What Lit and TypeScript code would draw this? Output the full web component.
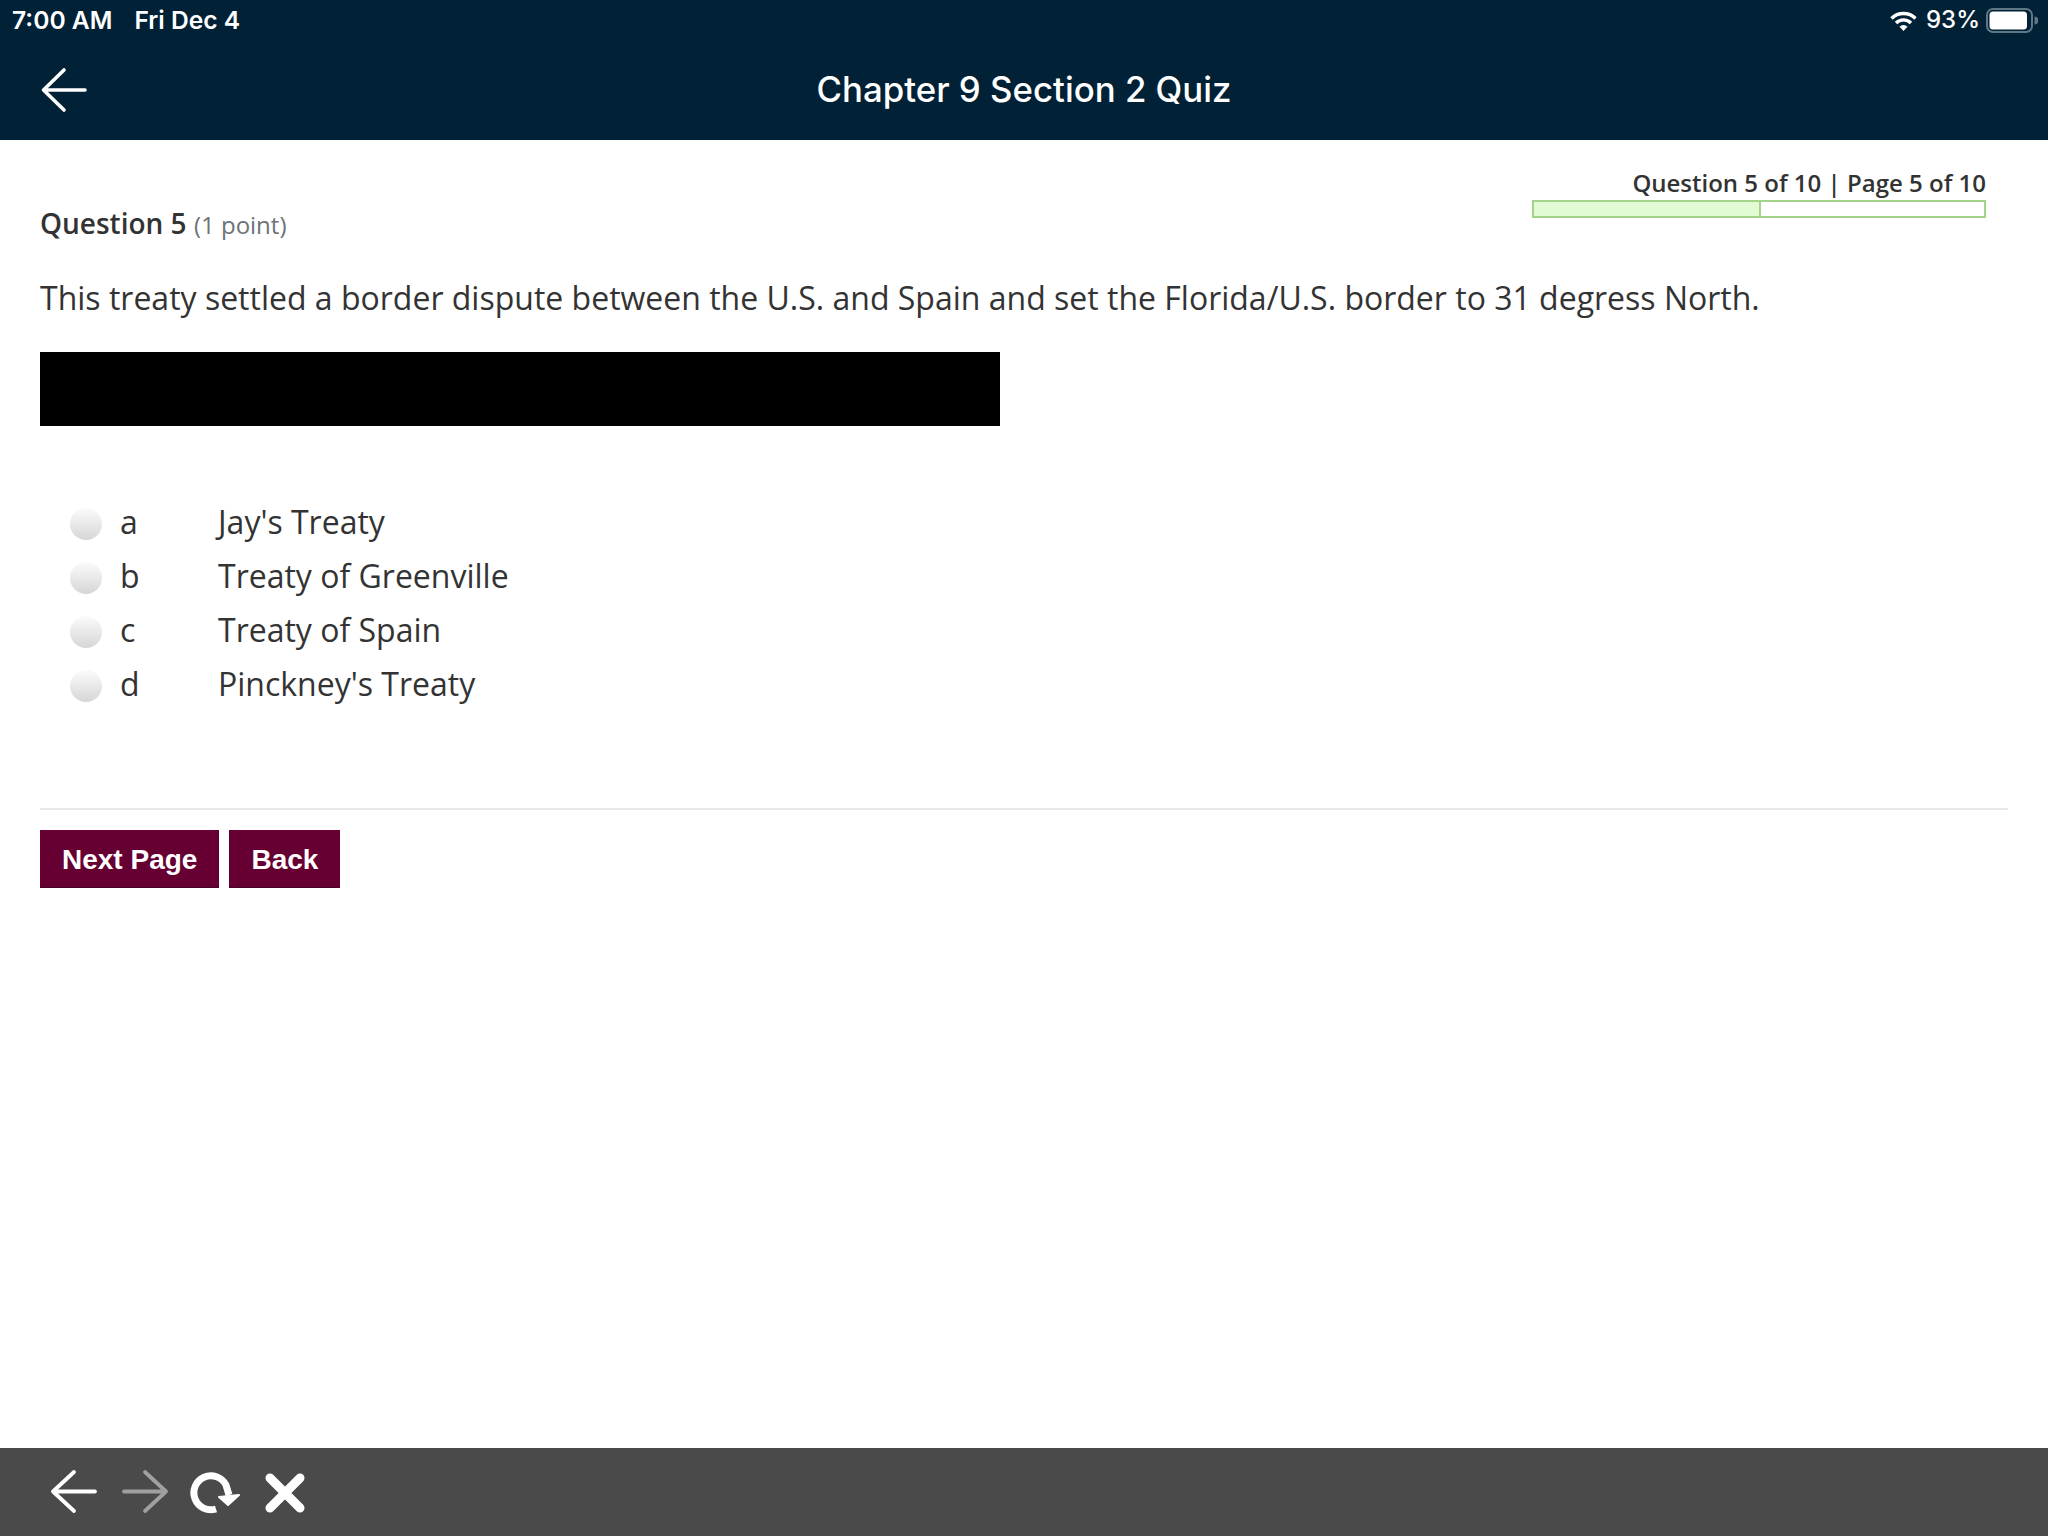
import { LitElement, html, css } from "lit";
import { customElement } from "lit/decorators.js";

const OPTIONS = [
  ["a", "Jay's Treaty"],
  ["b", "Treaty of Greenville"],
  ["c", "Treaty of Spain"],
  ["d", "Pinckney's Treaty"],
];

@customElement("app-root")
export class AppRoot extends LitElement {
  static styles = css`
    :host { display: flex; flex-direction: column; height: 1536px; width: 2048px; background: #fff; font-family: "Open Sans", sans-serif; color: #333; overflow: hidden; }
    .head { height: 140px; background: #012136; color: #fff; display: flex; flex-direction: column; flex: none; }
    .status { height: 38px; box-sizing: border-box; padding: 3px 10px 0 12px; display: flex; align-items: center; justify-content: space-between; font-family: Inter, sans-serif; }
    .status-left { display: flex; gap: 22px; font-weight: 600; font-size: 24.6px; padding-bottom: 2px; }
    .status-right { display: flex; align-items: center; gap: 6px; font-weight: 500; font-size: 24px; }
    .pct { padding-bottom: 2px; }
    .wifi { margin-right: 3px; }
    .nav { flex: 1; position: relative; display: flex; align-items: center; justify-content: center; }
    .nav svg { position: absolute; left: 40px; top: 29px; }
    .title { font-family: Inter, sans-serif; font-size: 34.8px; font-weight: 500; }
    .main { flex: 1; padding: 0 40px; position: relative; display: flex; flex-direction: column; }
    .progress { position: absolute; right: 62px; top: 27px; width: 454px; display: flex; flex-direction: column; align-items: flex-end; }
    .progress-text { font-size: 24px; font-weight: 600; line-height: 32px; color: #333; white-space: nowrap; }
    .bar { width: 100%; height: 18px; margin-top: 1px; box-sizing: border-box; border: 2px solid #a3d48a; display: flex; background: #fff; }
    .fill { background: #e2fbd5; border-right: 2px solid #a3d48a; }
    .qhead { margin-top: 63px; height: 40px; font-size: 28px; font-weight: 600; line-height: 40px; }
    .qhead small { font-size: 24px; font-weight: 400; color: #6c7378; line-height: 1; }
    .qtext { margin-top: 33px; font-size: 32px; line-height: 44px; height: 44px; }
    .redact { margin-top: 32px; width: 960px; height: 74px; background: #000; }
    .options { margin-top: 70px; display: flex; flex-direction: column; }
    .opt { display: flex; align-items: center; height: 54px; font-size: 32px; line-height: 44px; }
    .radio { width: 32px; height: 32px; border-radius: 50%; margin: 1px 0 0 30px; background: linear-gradient(#fbfbfb, #d6d6d6); }
    .letter { width: 98px; margin-left: 18px; padding-bottom: 2px; }
    .label { padding-bottom: 2px; }
    .rule { margin-top: 96px; height: 2px; background: #e9e9e9; }
    .buttons { margin-top: 20px; display: flex; gap: 10px; }
    .btn { height: 58px; box-sizing: border-box; background: #660033; color: #fff; border: 0; border-bottom: 1px solid #4a0025; padding: 2px 22px 0; font-family: "Liberation Sans", sans-serif; font-weight: 700; font-size: 28px; }
    .foot { height: 88px; background: #4a4a4a; flex: none; display: flex; align-items: center; padding-left: 48px; }
    .foot svg { display: block; }
  `;

  render() {
    return html`
      <div class="head">
        <div class="status">
          <div class="status-left"><span>7:00 AM</span><span>Fri Dec 4</span></div>
          <div class="status-right">
            <svg class="wifi" width="27" height="20" viewBox="0 0 27 20" fill="none" stroke="#fff" stroke-width="3.4">
              <path d="M1.5 7.5 A17 17 0 0 1 25.5 7.5" /><path d="M6 12 A10.5 10.5 0 0 1 21 12" /><path d="M13.5 20 L9.5 15.8 A5.6 5.6 0 0 1 17.5 15.8 Z" fill="#fff" stroke="none" />
            </svg>
            <span class="pct">93%</span>
            <svg width="52" height="25" viewBox="0 0 52 25">
              <rect x="1" y="1" width="45" height="23" rx="6" fill="none" stroke="#5f7685" stroke-width="2" />
              <rect x="3.5" y="3.5" width="37.5" height="18" rx="3.5" fill="#fff" />
              <path d="M48.5 8.5 a4 4 0 0 1 0 8 Z" fill="#5f7685" />
            </svg>
          </div>
        </div>
        <div class="nav">
          <svg width="48" height="46" viewBox="0 0 48 46" fill="none" stroke="#fff" stroke-width="3.6" stroke-linecap="round" stroke-linejoin="round">
            <path d="M45 23 H3.5 M24 3 L3.5 23 L24 43" />
          </svg>
          <div class="title">Chapter 9 Section 2 Quiz</div>
        </div>
      </div>
      <div class="main">
        <div class="progress">
          <div class="progress-text">Question 5 of 10 | Page 5 of 10</div>
          <div class="bar"><div class="fill" style="width:50%"></div></div>
        </div>
        <div class="qhead">Question 5 <small>(1 point)</small></div>
        <div class="qtext">This treaty settled a border dispute between the U.S. and Spain and set the Florida/U.S. border to 31 degress North.</div>
        <div class="redact"></div>
        <div class="options">
          ${OPTIONS.map(
            ([l, t]) => html`<div class="opt"><span class="radio"></span><span class="letter">${l}</span><span class="label">${t}</span></div>`
          )}
        </div>
        <div class="rule"></div>
        <div class="buttons">
          <button class="btn">Next Page</button>
          <button class="btn">Back</button>
        </div>
      </div>
      <div class="foot">
        <svg width="270" height="48" viewBox="0 0 270 48" fill="none" stroke-linecap="round" stroke-linejoin="round">
          <path d="M47 23.5 H5 M26 4 L5 23.5 L26 43" stroke="#fff" stroke-width="3.8" />
          <path d="M76 23.5 H118 M97 4 L118 23.5 L97 43" stroke="#a0a0a0" stroke-width="3.8" />
          <path d="M168 41 A17 17 0 1 1 178 17 L181 27" stroke="#fff" stroke-width="7" stroke-linecap="butt" stroke-linejoin="miter" />
          <path d="M171 29 L191 27 L180 37 Z" fill="#fff" stroke="#fff" stroke-width="2" />
          <path d="M222 10 L252 40 M252 10 L222 40" stroke="#fff" stroke-width="9" />
        </svg>
      </div>
    `;
  }
}
